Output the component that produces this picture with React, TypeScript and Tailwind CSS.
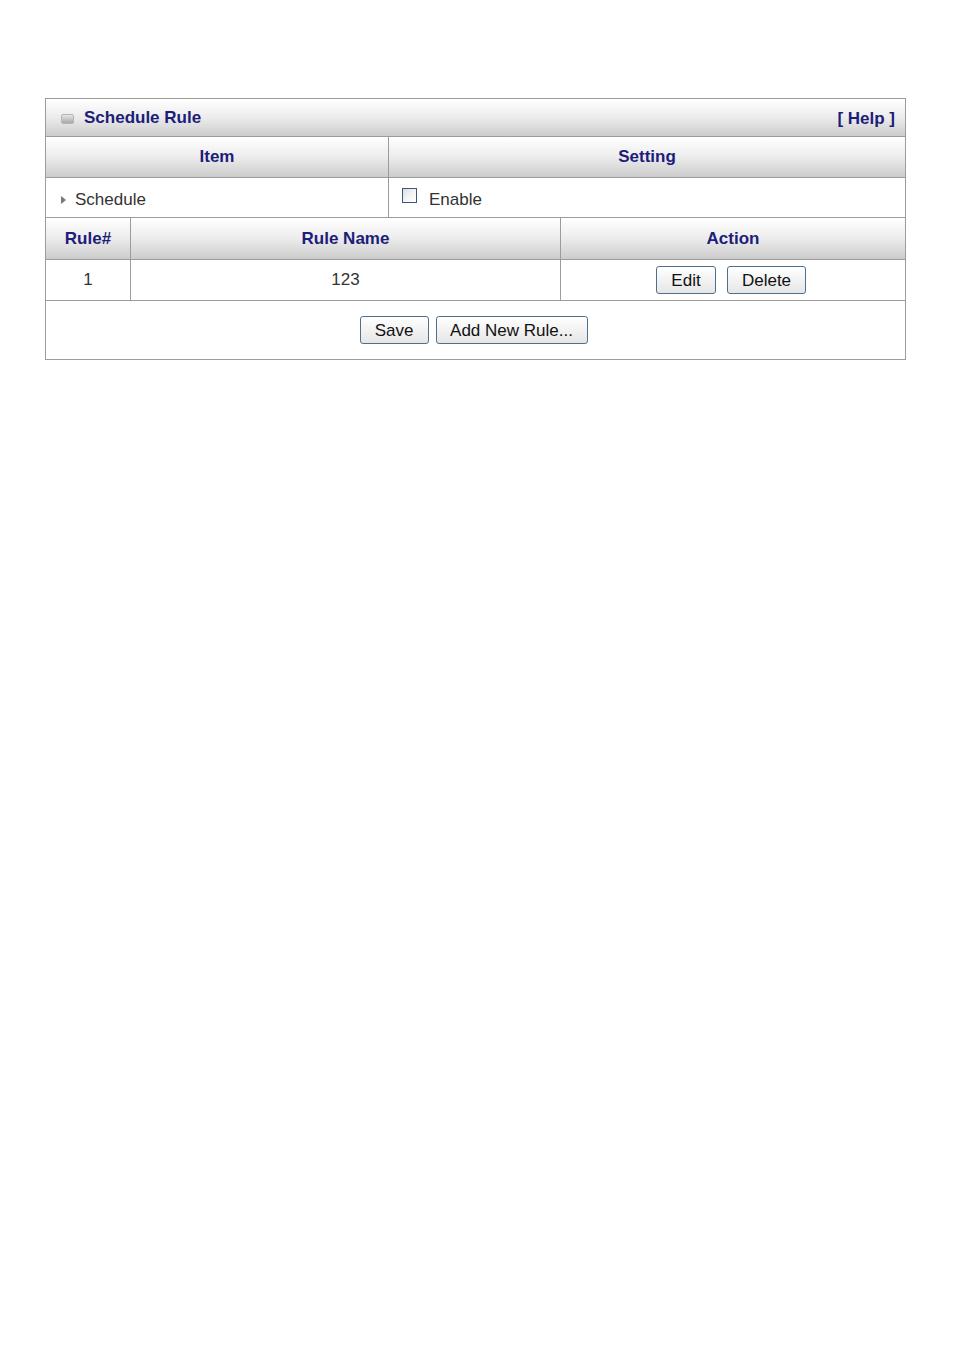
import React from 'react';

const head = 'bg-gradient-to-b from-white via-[#ececec] to-[#cccccc] text-[#1d1d7a] font-bold text-[17px]';
const cell = 'border-[#9c9c9c]';

function Btn({ label, w }: { label: string; w: string }) {
  return (
    <button
      className={`${w} h-[28px] rounded-[3px] border border-[#4f6f8f] bg-gradient-to-b from-white to-[#e6e6e6] text-[17px] text-[#111] leading-none`}
    >
      {label}
    </button>
  );
}

export default function App() {
  return (
    <div className="min-h-[1350px] bg-white pt-[98px] pl-[45px] font-['Liberation_Sans',Arial,sans-serif]">
      <div className="w-[861px] border border-[#9c9c9c]">
        {/* title bar */}
        <div className={`${head} h-[38px] flex items-center pl-[15px] pr-[10px] border-b ${cell}`}>
          <span className="w-[13px] h-[10px] rounded-[2px] bg-gradient-to-b from-[#e8e8e8] to-[#a8a8a8] border border-[#b5b5b5] mt-[2px]" />
          <span className="ml-[10px]">Schedule Rule</span>
          <span className="ml-auto mt-[2px]">[ Help ]</span>
        </div>

        {/* item / setting header */}
        <div className={`grid grid-cols-[343px_1fr] h-[41px] border-b ${cell}`}>
          <div className={`${head} flex items-center justify-center border-r ${cell}`}>Item</div>
          <div className={`${head} flex items-center justify-center`}>Setting</div>
        </div>

        {/* schedule row */}
        <div className={`grid grid-cols-[343px_1fr] h-[40px] border-b ${cell} text-[17px] text-[#333]`}>
          <div className={`flex items-center pl-[15px] pt-[4px] border-r ${cell}`}>
            <span className="w-0 h-0 border-y-[4px] border-y-transparent border-l-[5px] border-l-[#777]" />
            <span className="ml-[9px]">Schedule</span>
          </div>
          <div className="flex items-center pl-[13px] pt-[4px]">
            <span className="w-[15px] h-[15px] border border-[#3a5a7a] bg-gradient-to-br from-[#dcdcdc] via-[#f4f4f4] to-white -mt-[8px]" />
            <span className="ml-[12px]">Enable</span>
          </div>
        </div>

        {/* rule table header */}
        <div className={`grid grid-cols-[85px_430px_1fr] h-[42px] border-b ${cell}`}>
          <div className={`${head} flex items-center justify-center border-r ${cell}`}>Rule#</div>
          <div className={`${head} flex items-center justify-center border-r ${cell}`}>Rule Name</div>
          <div className={`${head} flex items-center justify-center`}>Action</div>
        </div>

        {/* data row */}
        <div className={`grid grid-cols-[85px_430px_1fr] h-[41px] border-b ${cell} text-[17px] text-[#333]`}>
          <div className={`flex items-center justify-center border-r ${cell}`}>1</div>
          <div className={`flex items-center justify-center border-r ${cell}`}>123</div>
          <div className="flex items-center justify-center gap-[11px] pr-[4px]">
            <Btn label="Edit" w="w-[60px]" />
            <Btn label="Delete" w="w-[79px]" />
          </div>
        </div>

        {/* buttons */}
        <div className="h-[58px] flex items-center justify-center gap-[7px] pr-[4px]">
          <Btn label="Save" w="w-[69px]" />
          <Btn label="Add New Rule..." w="w-[152px]" />
        </div>
      </div>
    </div>
  );
}
